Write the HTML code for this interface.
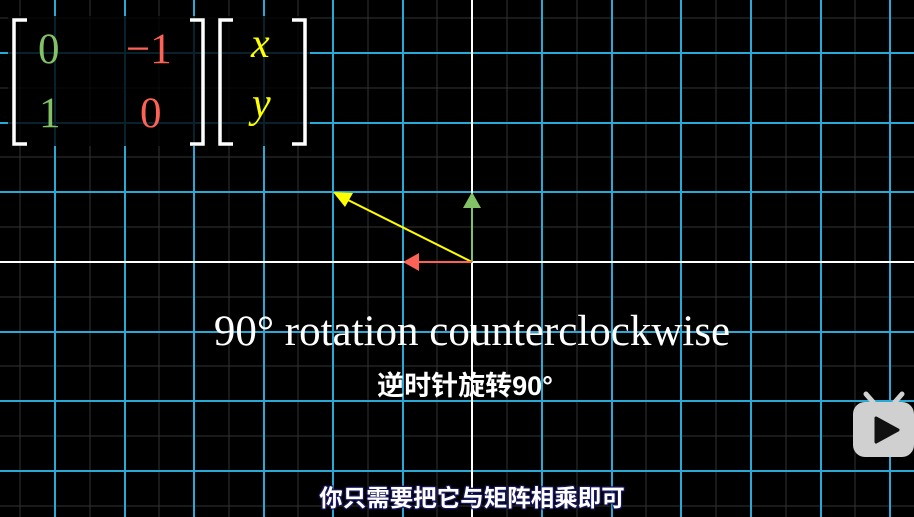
<!DOCTYPE html>
<html><head><meta charset="utf-8"><style>
body{margin:0;width:914px;height:517px;overflow:hidden;background:#000;position:relative;font-family:"Liberation Serif",serif}
svg{position:absolute;left:0;top:0}
.t{position:absolute;white-space:nowrap}
</style></head><body>
<svg width="914" height="517">
<g stroke="#333" stroke-width="1">
<line x1="20" y1="0" x2="20" y2="517"/><line x1="90" y1="0" x2="90" y2="517"/><line x1="159" y1="0" x2="159" y2="517"/><line x1="229" y1="0" x2="229" y2="517"/><line x1="298" y1="0" x2="298" y2="517"/><line x1="368" y1="0" x2="368" y2="517"/><line x1="437" y1="0" x2="437" y2="517"/><line x1="507" y1="0" x2="507" y2="517"/><line x1="577" y1="0" x2="577" y2="517"/><line x1="646" y1="0" x2="646" y2="517"/><line x1="716" y1="0" x2="716" y2="517"/><line x1="786" y1="0" x2="786" y2="517"/><line x1="855" y1="0" x2="855" y2="517"/>
<line x1="0" y1="18" x2="914" y2="18"/><line x1="0" y1="88" x2="914" y2="88"/><line x1="0" y1="157" x2="914" y2="157"/><line x1="0" y1="227" x2="914" y2="227"/><line x1="0" y1="297" x2="914" y2="297"/><line x1="0" y1="366" x2="914" y2="366"/><line x1="0" y1="436" x2="914" y2="436"/><line x1="0" y1="506" x2="914" y2="506"/>
</g>
<g stroke="#29a9d6" stroke-width="2">
<line x1="55" y1="0" x2="55" y2="517"/><line x1="125" y1="0" x2="125" y2="517"/><line x1="194" y1="0" x2="194" y2="517"/><line x1="264" y1="0" x2="264" y2="517"/><line x1="333" y1="0" x2="333" y2="517"/><line x1="403" y1="0" x2="403" y2="517"/><line x1="542" y1="0" x2="542" y2="517"/><line x1="612" y1="0" x2="612" y2="517"/><line x1="681" y1="0" x2="681" y2="517"/><line x1="751" y1="0" x2="751" y2="517"/><line x1="821" y1="0" x2="821" y2="517"/><line x1="890" y1="0" x2="890" y2="517"/>
<line x1="0" y1="53" x2="914" y2="53"/><line x1="0" y1="123" x2="914" y2="123"/><line x1="0" y1="192" x2="914" y2="192"/><line x1="0" y1="332" x2="914" y2="332"/><line x1="0" y1="401" x2="914" y2="401"/><line x1="0" y1="471" x2="914" y2="471"/>
</g>
<g stroke="#fff" stroke-width="2">
<line x1="472" y1="0" x2="472" y2="517"/><line x1="0" y1="262" x2="914" y2="262"/>
</g>
<rect x="8" y="16" width="302" height="130" fill="#000" opacity="0.8"/>
<g stroke="#fff" stroke-width="3.5" fill="none">
<path d="M27 20H14V144H27"/><path d="M190 20H203V144H190"/>
<path d="M233 20H220V144H233"/><path d="M292 20H305V144H292"/>
</g>
<line x1="472" y1="262" x2="346" y2="199" stroke="#ffff00" stroke-width="2"/>
<polygon points="333,192 353,193 345,207" fill="#ffff00"/>
<line x1="472" y1="262" x2="472" y2="205" stroke="#83c167" stroke-width="2"/>
<polygon points="472,192 463,208 481,208" fill="#83c167"/>
<line x1="472" y1="262" x2="416" y2="262" stroke="#fc6255" stroke-width="2"/>
<polygon points="403,262 419,253 419,271" fill="#fc6255"/>
<rect x="853" y="402" width="61" height="55" rx="12" fill="#d0d0d0"/>
<line x1="873" y1="402" x2="866" y2="394" stroke="#d0d0d0" stroke-width="5" stroke-linecap="round"/>
<line x1="895" y1="402" x2="902" y2="394" stroke="#d0d0d0" stroke-width="5" stroke-linecap="round"/>
<path d="M876 418L898 430L876 442Z" fill="#111" stroke="#111" stroke-width="3" stroke-linejoin="round"/>
</svg>
<div class="t" style="left:38px;top:25px;font-size:43px;color:#83c167">0</div>
<div class="t" style="left:126px;top:25px;font-size:43px;color:#fc6255">−1</div>
<div class="t" style="left:39px;top:89px;font-size:43px;color:#83c167">1</div>
<div class="t" style="left:140px;top:89px;font-size:43px;color:#fc6255">0</div>
<div class="t" style="left:251px;top:20px;font-size:42px;color:#ffff00;font-style:italic">x</div>
<div class="t" style="left:252px;top:80px;font-size:42px;color:#ffff00;font-style:italic">y</div>
<div class="t" style="left:0;width:944px;text-align:center;top:307px;font-size:43px;color:#fff">90° rotation counterclockwise</div>
<div class="t" style="left:0;width:930px;text-align:center;top:364px;font-size:27px;color:#fff;font-weight:bold;font-family:'Liberation Sans','Noto Sans CJK SC',sans-serif">逆时针旋转90°</div>
<div class="t" style="left:0;width:944px;text-align:center;top:479px;font-size:23.5px;color:#fff;font-weight:bold;font-family:'Liberation Sans','Noto Sans CJK SC',sans-serif;text-shadow:0 0 2px #1a1a60,1px 1px 1px #1a1a60,-1px -1px 1px #1a1a60,1px -1px 1px #1a1a60,-1px 1px 1px #1a1a60">你只需要把它与矩阵相乘即可</div>
</body></html>
